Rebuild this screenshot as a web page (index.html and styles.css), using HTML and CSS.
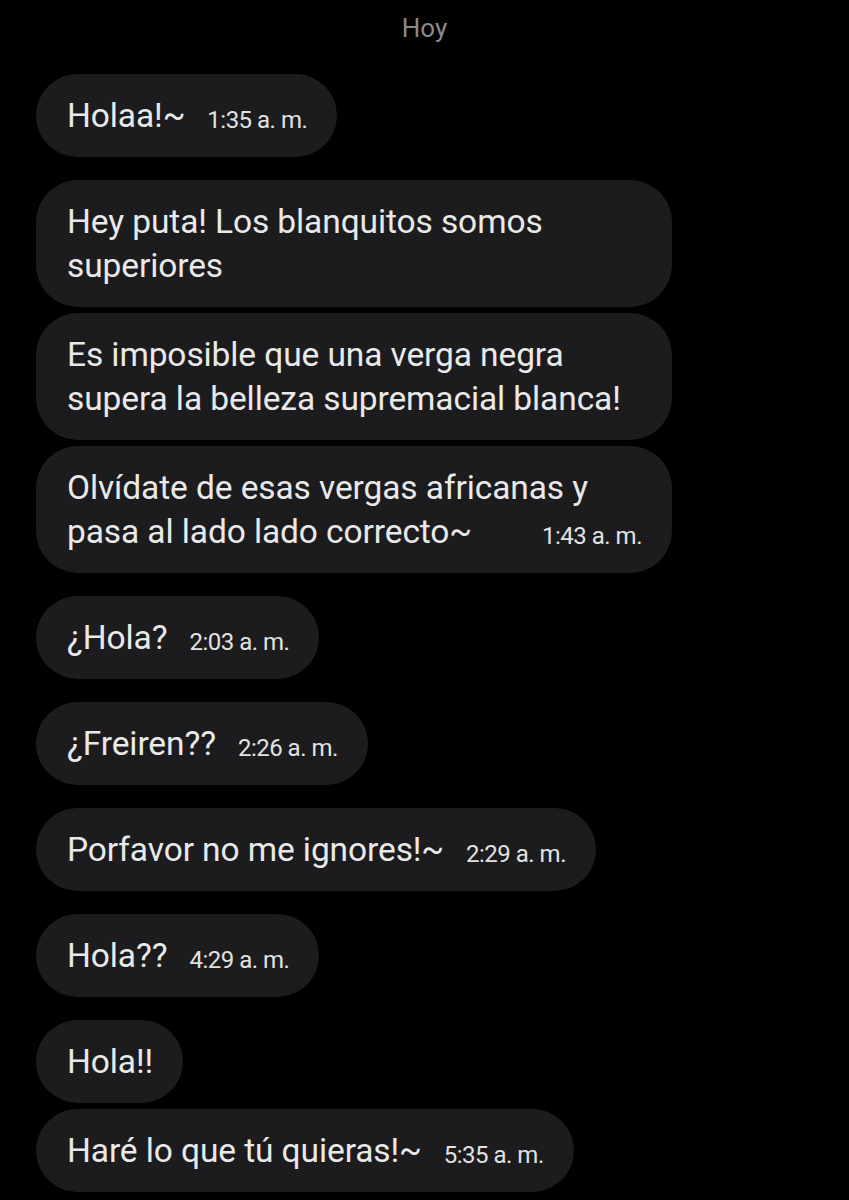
FILE: index.html
```html
<!DOCTYPE html>
<html lang="es">
<head>
  <meta charset="utf-8" />
  <title>Mensajes</title>
  <meta name="viewport" content="width=device-width, initial-scale=1" />
  <link rel="stylesheet" href="styles.css">
</head>
<body>
  <div class="chat">
    <div class="day">Hoy</div>

    <div class="group">
      <div class="bubble">Holaa!~<span class="time">1:35 a. m.</span></div>
    </div>

    <div class="group">
      <div class="bubble">Hey puta! Los blanquitos somos superiores</div>
      <div class="bubble">Es imposible que una verga negra supera la belleza supremacial blanca!</div>
      <div class="bubble">Olvídate de esas vergas africanas y pasa al lado lado correcto~<span class="time">1:43 a. m.</span></div>
    </div>

    <div class="group">
      <div class="bubble">¿Hola?<span class="time">2:03 a. m.</span></div>
    </div>

    <div class="group">
      <div class="bubble">¿Freiren??<span class="time">2:26 a. m.</span></div>
    </div>

    <div class="group">
      <div class="bubble">Porfavor no me ignores!~<span class="time">2:29 a. m.</span></div>
    </div>

    <div class="group">
      <div class="bubble">Hola??<span class="time">4:29 a. m.</span></div>
    </div>

    <div class="group">
      <div class="bubble">Hola!!</div>
      <div class="bubble">Haré lo que tú quieras!~<span class="time">5:35 a. m.</span></div>
    </div>
  </div>
</body>
</html>
```

FILE: styles.css
```css
:root {
  --bg:#000000;
  --bubble:#1c1c1e;
  --text:#e9e9e9;
  --muted:#8a8a8a;
}
body {
  margin:0;
  background:var(--bg);
  color:var(--text);
  font-family:Roboto,'Noto Sans',sans-serif;
}
.chat {
  padding:0 36px;
  display:flex;
  flex-direction:column;
  gap:23px;
}
.day {
  text-align:center;
  color:var(--muted);
  font-size:26px;
  line-height:56px;
  margin-bottom:-5px;
}
.group {
  display:flex;
  flex-direction:column;
  align-items:flex-start;
  gap:6px;
}
.bubble {
  background:var(--bubble);
  border-radius:42px;
  padding:19.5px 30px 19.5px 31px;
  max-width:575px;
  font-size:33.5px;
  line-height:44px;
  letter-spacing:-0.1px;
}
.time {
  float:right;
  margin-left:22px;
  padding-top:4px;
  margin-bottom:-4px;
  font-size:24px;
  line-height:44px;
  letter-spacing:-0.5px;
  color:#e2e2e2;
}
```
